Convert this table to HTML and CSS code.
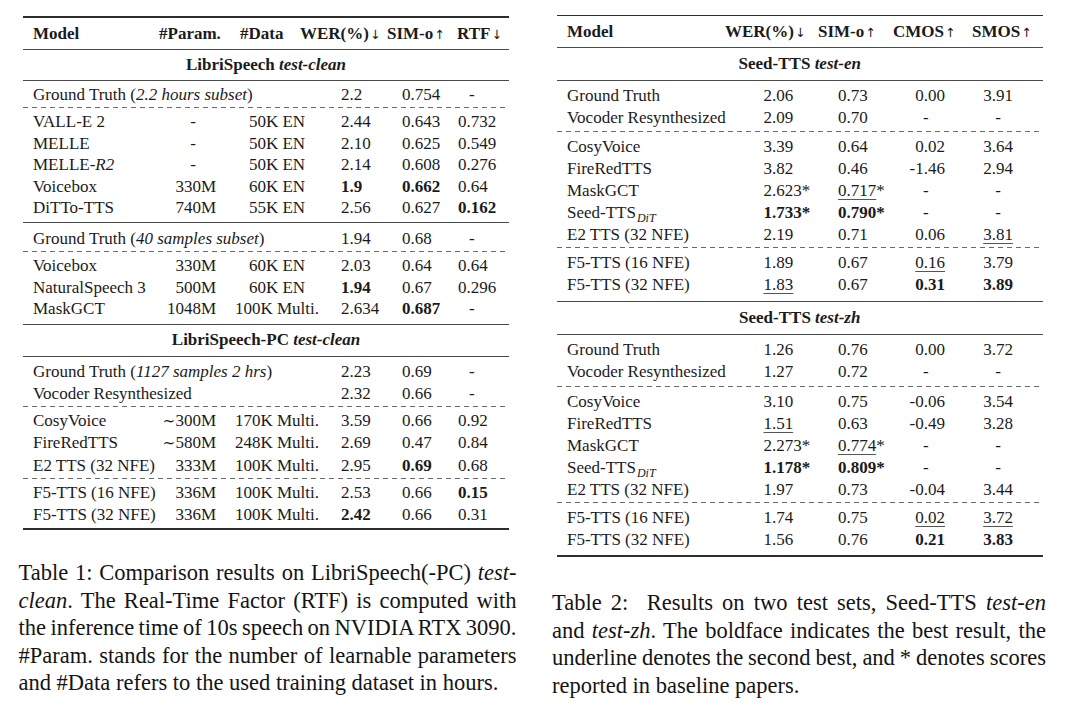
FILE: index.html
```html
<!DOCTYPE html>
<html lang="en">
<head>
<meta charset="utf-8">
<title>F5-TTS results tables</title>
<link rel="stylesheet" href="styles.css">
</head>
<body>
<div class="page">
  <section class="col col-l">
    <div class="tbl t1">
      <div class="rule-top"></div>
      <div class="hdr">
        <span class="m">Model</span><span>#Param.</span><span>#Data</span><span>WER(%)<span class="arr">↓</span></span><span>SIM-o<span class="arr">↑</span></span><span>RTF<span class="arr">↓</span></span>
      </div>
      <div class="rule"></div>
      <div class="title">LibriSpeech <i>test-clean</i></div>
      <div class="rule"></div>
      <div class="g">
        <div class="row"><span class="m s3">Ground Truth (<i>2.2 hours subset</i>)</span><span class="n">2.2</span><span class="n">0.754</span><span class="n rd">-</span></div>
      </div>
      <div class="dash"></div>
      <div class="g br">
        <div class="row"><span class="m">VALL-E 2</span><span class="r pd">-</span><span class="c">50K EN</span><span class="n">2.44</span><span class="n">0.643</span><span class="n">0.732</span></div>
        <div class="row"><span class="m">MELLE</span><span class="r pd">-</span><span class="c">50K EN</span><span class="n">2.10</span><span class="n">0.625</span><span class="n">0.549</span></div>
        <div class="row"><span class="m">MELLE-<i>R2</i></span><span class="r pd">-</span><span class="c">50K EN</span><span class="n">2.14</span><span class="n">0.608</span><span class="n">0.276</span></div>
        <div class="row"><span class="m">Voicebox</span><span class="r">330M</span><span class="c">60K EN</span><span class="n"><b>1.9</b></span><span class="n"><b>0.662</b></span><span class="n">0.64</span></div>
        <div class="row"><span class="m">DiTTo-TTS</span><span class="r">740M</span><span class="c">55K EN</span><span class="n">2.56</span><span class="n">0.627</span><span class="n"><b>0.162</b></span></div>
      </div>
      <div class="rule"></div>
      <div class="g ar">
        <div class="row"><span class="m s3">Ground Truth (<i>40 samples subset</i>)</span><span class="n">1.94</span><span class="n">0.68</span><span class="n rd">-</span></div>
      </div>
      <div class="dash"></div>
      <div class="g br2">
        <div class="row"><span class="m">Voicebox</span><span class="r">330M</span><span class="c">60K EN</span><span class="n">2.03</span><span class="n">0.64</span><span class="n">0.64</span></div>
        <div class="row"><span class="m">NaturalSpeech 3</span><span class="r">500M</span><span class="c">60K EN</span><span class="n"><b>1.94</b></span><span class="n">0.67</span><span class="n">0.296</span></div>
        <div class="row"><span class="m">MaskGCT</span><span class="r">1048M</span><span class="c">100K Multi.</span><span class="n">2.634</span><span class="n"><b>0.687</b></span><span class="n rd">-</span></div>
      </div>
      <div class="rule"></div>
      <div class="title">LibriSpeech-PC <i>test-clean</i></div>
      <div class="rule"></div>
      <div class="g ar2">
        <div class="row"><span class="m s3">Ground Truth (<i>1127 samples 2 hrs</i>)</span><span class="n">2.23</span><span class="n">0.69</span><span class="n rd">-</span></div>
        <div class="row"><span class="m s3">Vocoder Resynthesized</span><span class="n">2.32</span><span class="n">0.66</span><span class="n rd">-</span></div>
      </div>
      <div class="dash"></div>
      <div class="g">
        <div class="row"><span class="m">CosyVoice</span><span class="r"><span class="sim">∼</span>300M</span><span class="c">170K Multi.</span><span class="n">3.59</span><span class="n">0.66</span><span class="n">0.92</span></div>
        <div class="row"><span class="m">FireRedTTS</span><span class="r"><span class="sim">∼</span>580M</span><span class="c">248K Multi.</span><span class="n">2.69</span><span class="n">0.47</span><span class="n">0.84</span></div>
        <div class="row"><span class="m">E2 TTS (32 NFE)</span><span class="r">333M</span><span class="c">100K Multi.</span><span class="n">2.95</span><span class="n"><b>0.69</b></span><span class="n">0.68</span></div>
      </div>
      <div class="dash"></div>
      <div class="g br">
        <div class="row"><span class="m">F5-TTS (16 NFE)</span><span class="r">336M</span><span class="c">100K Multi.</span><span class="n">2.53</span><span class="n">0.66</span><span class="n"><b>0.15</b></span></div>
        <div class="row"><span class="m">F5-TTS (32 NFE)</span><span class="r">336M</span><span class="c">100K Multi.</span><span class="n"><b>2.42</b></span><span class="n">0.66</span><span class="n">0.31</span></div>
      </div>
      <div class="rule-top"></div>
    </div>
    <p class="cap cap-l">
      <span class="ln">Table 1: Comparison results on LibriSpeech(-PC) <i>test-</i></span>
      <span class="ln"><i>clean</i>. The Real-Time Factor (RTF) is computed with</span>
      <span class="ln">the inference time of 10s speech on NVIDIA RTX 3090.</span>
      <span class="ln">#Param. stands for the number of learnable parameters</span>
      <span class="ln last">and #Data refers to the used training dataset in hours.</span>
    </p>
  </section>

  <section class="col col-r">
    <div class="tbl t2">
      <div class="rule-top"></div>
      <div class="hdr">
        <span class="m">Model</span><span>WER(%)<span class="arr">↓</span></span><span>SIM-o<span class="arr">↑</span></span><span>CMOS<span class="arr">↑</span></span><span>SMOS<span class="arr">↑</span></span>
      </div>
      <div class="rule"></div>
      <div class="title">Seed-TTS <i>test-en</i></div>
      <div class="rule"></div>
      <div class="g">
        <div class="row"><span class="m">Ground Truth</span><span class="n">2.06</span><span class="n">0.73</span><span class="r">0.00</span><span class="sm">3.91</span></div>
        <div class="row"><span class="m">Vocoder Resynthesized</span><span class="n">2.09</span><span class="n">0.70</span><span class="c">-</span><span class="sm">-</span></div>
      </div>
      <div class="dash"></div>
      <div class="g bd">
        <div class="row"><span class="m">CosyVoice</span><span class="n">3.39</span><span class="n">0.64</span><span class="r">0.02</span><span class="sm">3.64</span></div>
        <div class="row"><span class="m">FireRedTTS</span><span class="n">3.82</span><span class="n">0.46</span><span class="r">-1.46</span><span class="sm">2.94</span></div>
        <div class="row"><span class="m">MaskGCT</span><span class="n">2.623*</span><span class="n"><span class="u">0.717</span>*</span><span class="c">-</span><span class="sm">-</span></div>
        <div class="row"><span class="m">Seed-TTS<span class="sub">DiT</span></span><span class="n"><b>1.733*</b></span><span class="n"><b>0.790*</b></span><span class="c">-</span><span class="sm">-</span></div>
        <div class="row"><span class="m">E2 TTS (32 NFE)</span><span class="n">2.19</span><span class="n">0.71</span><span class="r">0.06</span><span class="sm"><span class="u">3.81</span></span></div>
      </div>
      <div class="dash"></div>
      <div class="g br">
        <div class="row"><span class="m">F5-TTS (16 NFE)</span><span class="n">1.89</span><span class="n">0.67</span><span class="r"><span class="u">0.16</span></span><span class="sm">3.79</span></div>
        <div class="row"><span class="m">F5-TTS (32 NFE)</span><span class="n"><span class="u">1.83</span></span><span class="n">0.67</span><span class="r"><b>0.31</b></span><span class="sm"><b>3.89</b></span></div>
      </div>
      <div class="rule"></div>
      <div class="title title2">Seed-TTS <i>test-zh</i></div>
      <div class="rule"></div>
      <div class="g">
        <div class="row"><span class="m">Ground Truth</span><span class="n">1.26</span><span class="n">0.76</span><span class="r">0.00</span><span class="sm">3.72</span></div>
        <div class="row"><span class="m">Vocoder Resynthesized</span><span class="n">1.27</span><span class="n">0.72</span><span class="c">-</span><span class="sm">-</span></div>
      </div>
      <div class="dash"></div>
      <div class="g bd">
        <div class="row"><span class="m">CosyVoice</span><span class="n">3.10</span><span class="n">0.75</span><span class="r">-0.06</span><span class="sm">3.54</span></div>
        <div class="row"><span class="m">FireRedTTS</span><span class="n"><span class="u">1.51</span></span><span class="n">0.63</span><span class="r">-0.49</span><span class="sm">3.28</span></div>
        <div class="row"><span class="m">MaskGCT</span><span class="n">2.273*</span><span class="n"><span class="u">0.774</span>*</span><span class="c">-</span><span class="sm">-</span></div>
        <div class="row"><span class="m">Seed-TTS<span class="sub">DiT</span></span><span class="n"><b>1.178*</b></span><span class="n"><b>0.809*</b></span><span class="c">-</span><span class="sm">-</span></div>
        <div class="row"><span class="m">E2 TTS (32 NFE)</span><span class="n">1.97</span><span class="n">0.73</span><span class="r">-0.04</span><span class="sm">3.44</span></div>
      </div>
      <div class="dash"></div>
      <div class="g br">
        <div class="row"><span class="m">F5-TTS (16 NFE)</span><span class="n">1.74</span><span class="n">0.75</span><span class="r"><span class="u">0.02</span></span><span class="sm"><span class="u">3.72</span></span></div>
        <div class="row"><span class="m">F5-TTS (32 NFE)</span><span class="n">1.56</span><span class="n">0.76</span><span class="r"><b>0.21</b></span><span class="sm"><b>3.83</b></span></div>
      </div>
      <div class="rule-top"></div>
    </div>
    <p class="cap cap-r">
      <span class="ln">Table 2:&nbsp; Results on two test sets, Seed-TTS <i>test-en</i></span>
      <span class="ln">and <i>test-zh</i>. The boldface indicates the best result, the</span>
      <span class="ln">underline denotes the second best, and * denotes scores</span>
      <span class="ln last">reported in baseline papers.</span>
    </p>
  </section>
</div>
</body>
</html>
```

FILE: styles.css
```css
html, body {
  margin: 0;
  padding: 0;
}

body {
  background: #ffffff;
  font-family: "Liberation Serif", "Times New Roman", "DejaVu Serif", serif;
  color: #1b1b1b;
}

.page {
  display: flex;
  width: 1080px;
  height: 712px;
  overflow: hidden;
}

.col {
  width: 540px;
  display: flex;
  flex-direction: column;
  box-sizing: border-box;
}

.col-l {
  padding: 16px 0 0 18.5px;
}

.col-r {
  padding: 14.5px 0 0 12px;
}

.tbl {
  margin-left: 4.5px;
  width: 486px;
  font-size: 17px;
}

.t2 {
  width: 486.5px;
}

.rule-top {
  height: 1.5px;
  background: #2e2e2e;
}

.rule {
  height: 1px;
  background: #4a4a4a;
}

.dash {
  height: 1px;
  background: repeating-linear-gradient(90deg, #6a6a6a 0 5px, transparent 5px 9px);
}

.hdr {
  display: grid;
  height: 31px;
  line-height: 31px;
  font-weight: bold;
  white-space: nowrap;
}

.t1 .hdr {
  grid-template-columns: 136px 81px 60px 87px 70px 1fr;
}

.t2 .hdr {
  grid-template-columns: 168.5px 93px 75px 79px 1fr;
}

.arr {
  font-family: "DejaVu Sans", sans-serif;
  font-weight: normal;
  font-size: 0.74em;
  margin-left: 1px;
}

.title {
  height: 30.5px;
  line-height: 30.5px;
  text-align: center;
  font-weight: bold;
}

.t2 .title {
  height: 31.5px;
  line-height: 31.5px;
}

.t2 .title2 {
  height: 32.5px;
  line-height: 32.5px;
}

/* left table groups */
.g {
  padding: 3px 0 1.5px;
}

.g.ar {
  padding-top: 5px;
}

.g.ar2 {
  padding-top: 4px;
}

.g.br {
  padding-bottom: 3px;
}

.g.br2 {
  padding-bottom: 4.5px;
}

/* right table groups */
.t2 .g {
  padding: 4px 0 2.5px;
}

.t2 .g.bd {
  padding-bottom: 1px;
}

.t2 .g.br {
  padding-bottom: 4.5px;
}

.row {
  display: grid;
  line-height: 21.6px;
  white-space: nowrap;
}

.t1 .row {
  grid-template-columns: 137px 56px 122px 61px 56px 1fr;
}

.t2 .row {
  grid-template-columns: 204px 74.5px 71.5px 38.5px 1fr;
  line-height: 22px;
}

.m {
  padding-left: 10px;
}

.t2 .m {
  padding-left: 10.5px;
}

.s3 {
  grid-column: 1 / 4;
}

.r {
  text-align: right;
}

.c {
  text-align: center;
}

.n {
  padding-left: 3px;
}

.pd {
  padding-right: 20px;
}

.rd {
  padding-left: 14px;
}

.sm {
  text-align: center;
  padding-left: 8px;
}

.sim {
  font-family: "DejaVu Serif", serif;
  font-size: 0.9em;
}

.sub {
  font-style: italic;
  font-size: 12px;
  line-height: 0;
  position: relative;
  top: 4px;
  margin-left: 1px;
}

.u {
  text-decoration: underline;
  text-decoration-thickness: 1px;
  text-underline-offset: 3px;
  text-decoration-color: #555;
}

.cap {
  margin: 0;
  font-size: 22.5px;
  line-height: 27.5px;
  color: #141414;
}

.cap-l {
  width: 498px;
  margin-top: 29.5px;
}

.cap-r {
  width: 494px;
  margin-top: 32.5px;
}

.ln {
  display: block;
  text-align: justify;
  text-align-last: justify;
  word-spacing: -2px;
  white-space: nowrap;
}

.ln.last {
  text-align: left;
  text-align-last: left;
  word-spacing: 0;
}
```
